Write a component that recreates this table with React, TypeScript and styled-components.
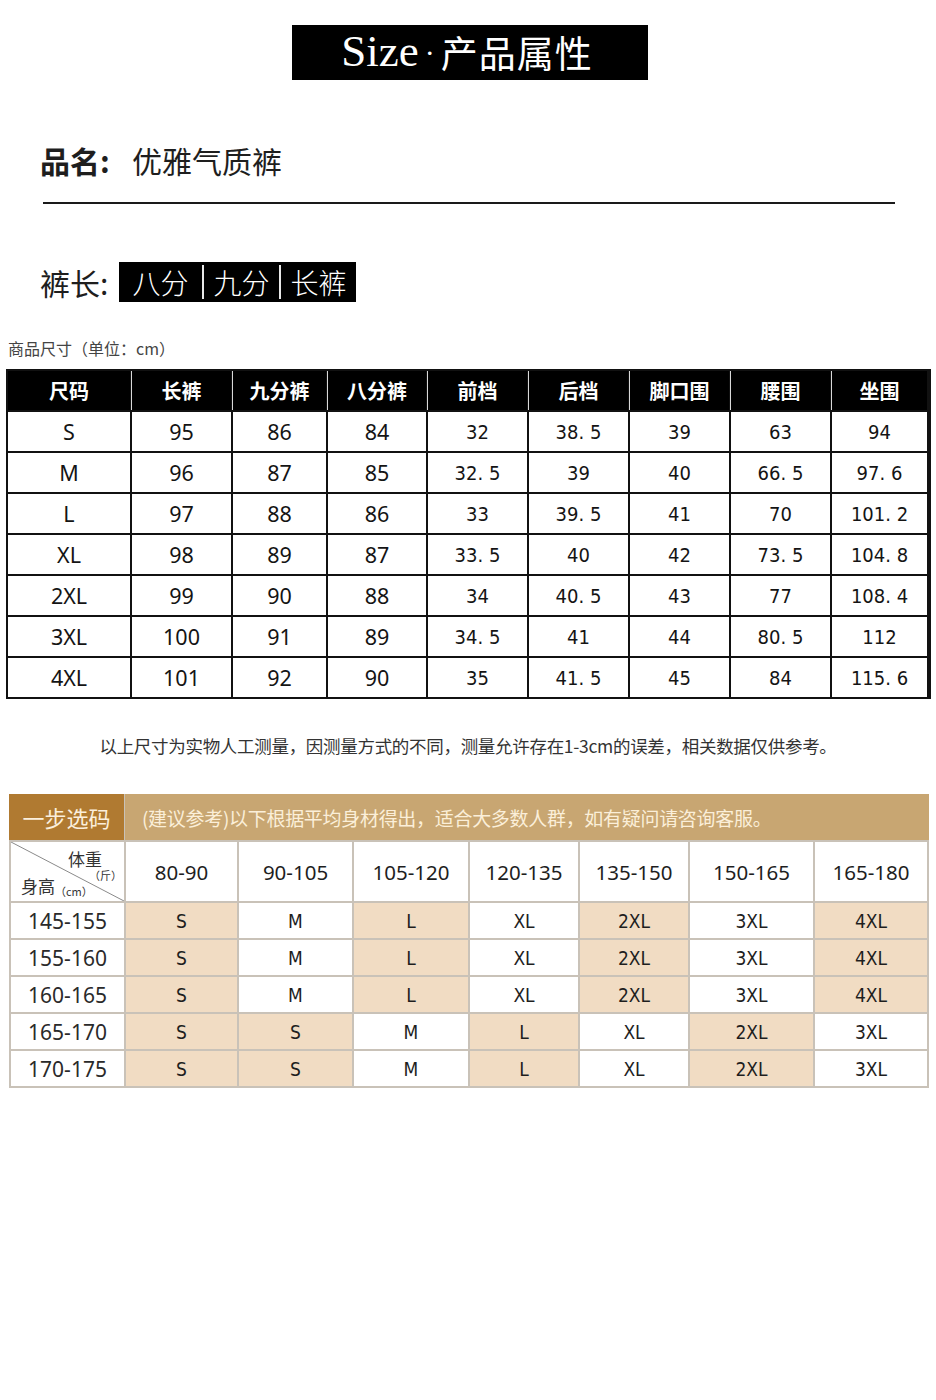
import React from "react";
import styled, { createGlobalStyle } from "styled-components";

const Global = createGlobalStyle`
  html, body { margin: 0; padding: 0; background: #fff; }
  body { font-family: "Noto Sans CJK SC", "Noto Sans", sans-serif; color: #222; }
`;

const Page = styled.div`
  width: 936px;
  min-height: 1400px;
  background: #fff;
  display: flex;
  flex-direction: column;
  padding-top: 25px;
  box-sizing: border-box;
`;

const TitleBox = styled.div`
  align-self: flex-start;
  margin-left: 292px;
  width: 356px;
  height: 55px;
  background: #000;
  display: flex;
  align-items: center;
  justify-content: center;
  color: #fff;
  gap: 4px;
  padding-right: 6px;
  box-sizing: border-box;
`;

const TitleLatin = styled.span`
  font-family: "Liberation Serif", serif;
  font-size: 45px;
  line-height: 1;
  margin-top: -2px;
`;

const TitleDot = styled.span`
  font-family: "Liberation Serif", serif;
  font-size: 30px;
  line-height: 1;
  margin: 0 2px;
`;

const TitleCJK = styled.span`
  font-family: "Noto Sans CJK SC", sans-serif;
  font-size: 37px;
  line-height: 1;
  font-weight: 400;
  letter-spacing: 1px;
`;

const NameRow = styled.div`
  margin: 60px 0 0 40px;
  height: 40px;
  display: flex;
  align-items: center;
  font-size: 30px;
  color: #1e1e1e;
`;

const NameLabel = styled.span`
  font-weight: 700;
  width: 92px;
`;

const NameValue = styled.span`
  font-weight: 400;
`;

const Rule = styled.div`
  margin: 22px 41px 0 43px;
  height: 2px;
  background: #1a1a1a;
`;

const LengthRow = styled.div`
  margin: 58px 0 0 40px;
  display: flex;
  align-items: center;
  height: 40px;
`;

const LengthLabel = styled.span`
  font-size: 30px;
  color: #1e1e1e;
  width: 79px;
`;

const LengthBox = styled.div`
  display: flex;
  background: #000;
  height: 40px;
  align-items: center;
`;

const LengthSeg = styled.span<{ $w: number; $sep?: boolean }>`
  width: ${(p) => p.$w}px;
  height: 34px;
  display: flex;
  align-items: center;
  justify-content: center;
  color: #fff;
  font-size: 28px;
  font-weight: 300;
  box-sizing: border-box;
  border-left: ${(p) => (p.$sep ? "2px solid #e8e8e8" : "none")};
`;

const UnitLabel = styled.div`
  margin: 36px 0 0 8px;
  height: 20px;
  font-size: 16px;
  line-height: 20px;
  color: #444;
`;

const SizeGrid = styled.div`
  margin: 11px 0 0 6px;
  width: 925px;
  box-sizing: border-box;
  display: grid;
  grid-template-columns: 122px 99px 93px 98px 99px 99px 99px 99px 95px;
  grid-auto-rows: 39px;
  gap: 2px;
  padding: 2px;
  background: #111;
`;

const HeadCell = styled.div<{ $first?: boolean }>`
  background: #000;
  color: #fff;
  display: flex;
  align-items: center;
  justify-content: center;
  font-size: 20px;
  font-weight: 700;
  margin-left: ${(p) => (p.$first ? "0" : "-1px")};
  border-left: ${(p) => (p.$first ? "none" : "1px solid #d8d8d8")};
`;

const BodyCell = styled.div<{ $narrow?: boolean }>`
  background: #fff;
  display: flex;
  align-items: center;
  justify-content: center;
  color: #141414;
  font-family: ${(p) =>
    p.$narrow ? '"DejaVu Sans", sans-serif' : '"Noto Sans", "DejaVu Sans", sans-serif'};
  font-stretch: ${(p) => (p.$narrow ? "condensed" : "normal")};
  font-size: ${(p) => (p.$narrow ? "20px" : "21.5px")};
  font-weight: 400;
`;

const Note = styled.div`
  margin-top: 37px;
  height: 20px;
  line-height: 20px;
  text-align: center;
  font-size: 17.5px;
  color: #333;
  letter-spacing: -0.3px;
`;

const PickGrid = styled.div`
  margin: 38px 0 0 9px;
  width: 920px;
  box-sizing: border-box;
  display: grid;
  grid-template-columns: 113px 111px 113px 114px 108px 108px 123px 112px;
  grid-template-rows: 44px 59px repeat(5, 35px);
  gap: 2px;
  padding: 2px;
  background: #c9c2b8;
`;

const PickTitle = styled.div`
  background: #b07a31;
  color: #fbefdc;
  font-size: 22px;
  display: flex;
  align-items: center;
  justify-content: center;
  margin: -2px 0 0 -2px;
`;

const PickBanner = styled.div`
  grid-column: 2 / span 7;
  background: #c8a672;
  color: #fbefd9;
  font-size: 19px;
  display: flex;
  align-items: center;
  padding-left: 17px;
  margin: -2px -2px 0 -1px;
  letter-spacing: -0.3px;
`;

const CornerCell = styled.div`
  position: relative;
  background: #fff;
  overflow: hidden;
`;

const CornerSvg = styled.svg`
  position: absolute;
  inset: 0;
  width: 100%;
  height: 100%;
`;

const CornerText = styled.span<{ $x: number; $y: number; $size: number }>`
  position: absolute;
  left: ${(p) => p.$x}px;
  top: ${(p) => p.$y}px;
  font-size: ${(p) => p.$size}px;
  line-height: 1;
  color: #333;
  white-space: nowrap;
`;

const WeightCell = styled.div`
  background: #fff;
  display: flex;
  align-items: center;
  justify-content: center;
  font-family: "Noto Sans", sans-serif;
  font-size: 20.5px;
  color: #1e1e1e;
`;

const HeightCell = styled.div`
  background: #fff;
  display: flex;
  align-items: center;
  justify-content: center;
  font-family: "Noto Sans", sans-serif;
  font-size: 21px;
  color: #2a2a2a;
`;

const PickCell = styled.div<{ $hl: boolean }>`
  background: ${(p) => (p.$hl ? "#f1dcc3" : "#fff")};
  display: flex;
  align-items: center;
  justify-content: center;
  font-family: "DejaVu Sans", sans-serif;
  font-stretch: condensed;
  font-size: 19px;
  color: #1e1e1e;
`;

const heads = ["尺码", "长裤", "九分裤", "八分裤", "前档", "后档", "脚口围", "腰围", "坐围"];
const rows = [
  ["S", "95", "86", "84", "32", "38.5", "39", "63", "94"],
  ["M", "96", "87", "85", "32.5", "39", "40", "66.5", "97.6"],
  ["L", "97", "88", "86", "33", "39.5", "41", "70", "101.2"],
  ["XL", "98", "89", "87", "33.5", "40", "42", "73.5", "104.8"],
  ["2XL", "99", "90", "88", "34", "40.5", "43", "77", "108.4"],
  ["3XL", "100", "91", "89", "34.5", "41", "44", "80.5", "112"],
  ["4XL", "101", "92", "90", "35", "41.5", "45", "84", "115.6"],
];

const weights = ["80-90", "90-105", "105-120", "120-135", "135-150", "150-165", "165-180"];
const A = ["S", "M", "L", "XL", "2XL", "3XL", "4XL"];
const B = ["S", "S", "M", "L", "XL", "2XL", "3XL"];
const picks: { h: string; s: string[]; hl: boolean[] }[] = [
  { h: "145-155", s: A, hl: [true, false, true, false, true, false, true] },
  { h: "155-160", s: A, hl: [true, false, true, false, true, false, true] },
  { h: "160-165", s: A, hl: [true, false, true, false, true, false, true] },
  { h: "165-170", s: B, hl: [true, true, false, true, false, true, false] },
  { h: "170-175", s: B, hl: [true, true, false, true, false, true, false] },
];

const fmt = (v: string, narrow: boolean) => (narrow ? v.replace(".", ". ") : v);

export default function App() {
  return (
    <Page>
      <Global />
      <TitleBox>
        <TitleLatin>Size</TitleLatin>
        <TitleDot>·</TitleDot>
        <TitleCJK>产品属性</TitleCJK>
      </TitleBox>

      <NameRow>
        <NameLabel>品名:</NameLabel>
        <NameValue>优雅气质裤</NameValue>
      </NameRow>
      <Rule />

      <LengthRow>
        <LengthLabel>裤长:</LengthLabel>
        <LengthBox>
          <LengthSeg $w={83}>八分</LengthSeg>
          <LengthSeg $w={77} $sep>九分</LengthSeg>
          <LengthSeg $w={77} $sep>长裤</LengthSeg>
        </LengthBox>
      </LengthRow>

      <UnitLabel>商品尺寸（单位：cm）</UnitLabel>

      <SizeGrid>
        {heads.map((h, i) => (
          <HeadCell key={h} $first={i === 0}>
            {h}
          </HeadCell>
        ))}
        {rows.map((r) =>
          r.map((v, i) => (
            <BodyCell key={r[0] + i} $narrow={i >= 4}>
              {fmt(v, i >= 4)}
            </BodyCell>
          ))
        )}
      </SizeGrid>

      <Note>以上尺寸为实物人工测量，因测量方式的不同，测量允许存在1-3cm的误差，相关数据仅供参考。</Note>

      <PickGrid>
        <PickTitle>一步选码</PickTitle>
        <PickBanner>(建议参考)以下根据平均身材得出，适合大多数人群，如有疑问请咨询客服。</PickBanner>
        <CornerCell>
          <CornerSvg viewBox="0 0 113 59" preserveAspectRatio="none">
            <line x1="0" y1="0" x2="113" y2="59" stroke="#8a8a8a" strokeWidth="1" />
          </CornerSvg>
          <CornerText $x={57} $y={8} $size={17}>体重</CornerText>
          <CornerText $x={78} $y={28} $size={11}>（斤）</CornerText>
          <CornerText $x={10} $y={35} $size={17}>身高</CornerText>
          <CornerText $x={44} $y={44} $size={11}>（cm）</CornerText>
        </CornerCell>
        {weights.map((w) => (
          <WeightCell key={w}>{w}</WeightCell>
        ))}
        {picks.map((p) => (
          <React.Fragment key={p.h}>
            <HeightCell>{p.h}</HeightCell>
            {p.s.map((s, i) => (
              <PickCell key={p.h + i} $hl={p.hl[i]}>
                {s}
              </PickCell>
            ))}
          </React.Fragment>
        ))}
      </PickGrid>
    </Page>
  );
}
